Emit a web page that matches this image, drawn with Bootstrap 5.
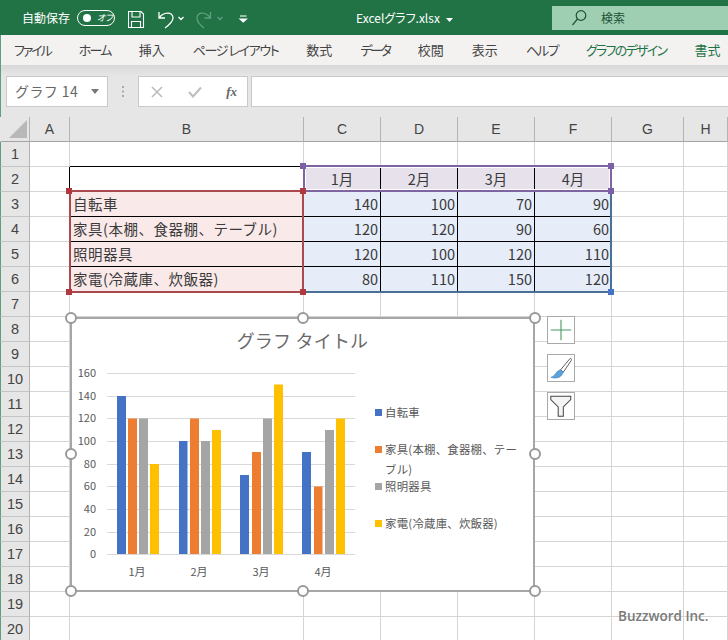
<!DOCTYPE html>
<html lang="ja">
<head>
<meta charset="utf-8">
<title>Excelグラフ.xlsx</title>
<link href="https://cdn.jsdelivr.net/npm/bootstrap@5.3.0/dist/css/bootstrap.min.css" rel="stylesheet">
<style>
html,body{height:640px;overflow:hidden;background:#fff}
body{font-family:"Noto Sans CJK JP","Noto Sans",sans-serif;color:#333}
.title-bar{height:35px;background:#217346;color:#fff;font-size:12px}
.autosave{margin-left:22px;width:48px;white-space:nowrap}
.toggle-pill{width:38px;height:16px;margin-left:7px;border:1.5px solid #fff;border-radius:8px;font-size:9px;font-style:italic;padding-left:5px;gap:6px;font-feature-settings:"palt"}
.toggle-knob{width:8px;height:8px;border-radius:50%;background:#fff}
.qa-strip{display:block;margin-left:13px;flex:none}
.file-name{position:absolute;left:356px;top:0;line-height:35px;white-space:nowrap;font-feature-settings:"palt"}
.file-name svg{margin-left:6px}
.search-box{position:absolute;left:552px;top:6px;width:176px;height:24px;background:#9fcfb2;color:#1d5236;padding-left:19px;gap:14px;font-size:12px}
.ribbon-tabs{height:30px;background:#f3f2f1;padding-left:13px;gap:28px;font-size:13px;color:#444;border-left:1px solid #5f9f7f;white-space:nowrap;font-feature-settings:"palt"}
.ribbon-tabs .chart-tab{color:#1f7246}
.ribbon-tabs .kern-a{letter-spacing:-2.1px}
.ribbon-tabs .kern-b{letter-spacing:-1.7px}
.ribbon-tabs .kern-c{letter-spacing:-1.4px}
.ribbon-tabs .kern-d{letter-spacing:-2.3px}
.formula-area{height:52px;background:linear-gradient(#d8d8d8,#e6e6e6 11px);padding:11px 0 10px 5px;border-left:1px solid #5f9f7f}
.name-box{width:102px;height:31px;background:#fff;border:1px solid #c9c9c9;font-size:14px;color:#666;padding:0 8px;letter-spacing:.4px}
.grip-dots{width:30px;flex:none}
.fx-box{width:110px;height:31px;background:#fff;border:1px solid #c9c9c9;padding:0 10px 0 11px}
.fx-mark{font-family:"Liberation Serif",serif;font-style:italic;font-weight:700;font-size:13px;color:#666}
.formula-input{height:31px;margin-left:3px;background:#fff;border:1px solid #c9c9c9;border-right:0;flex:1}
.sheet-wrap{height:523px;overflow:hidden}
.sheet-grid.table{table-layout:fixed;width:728px;margin:0;border-collapse:separate;border-spacing:0;--bs-table-color:#3a3a3a;--bs-table-bg:#fff}
.sheet-grid.table>:not(caption)>*>*{padding:0;height:25px;line-height:24px;border-width:0 1px 1px 0;border-style:solid;border-color:#d4d4d4;font-size:14.5px;font-weight:400;box-shadow:none;vertical-align:middle}
.sheet-grid.table>*>*>th{background:#e6e6e6;text-align:center;color:#444;font-family:"Liberation Sans",sans-serif;font-size:14px;border-color:#b4b4b4}
.sheet-grid.table>*>tr>.row-num{border-left:1px solid #5f9f7f;border-bottom-color:#c4c4c4;font-size:14.5px}
.sheet-grid.table>thead>tr>th{border-bottom-color:#a4a4a4}
.sheet-grid.table>thead>tr>th.corner-cell{border-left:1px solid #e6e6e6;position:relative}
.corner-tri{position:absolute;left:8px;top:3px;width:18px;height:18px;background:#b8b8b8;clip-path:polygon(100% 0,100% 100%,0 100%)}
.sheet-grid.table>*>*>.cell-name{background:#f9e9e9;padding-left:3px;white-space:nowrap;letter-spacing:.5px}
.sheet-grid.table>*>*>.cell-num{background:#e6edf9;text-align:right;padding-right:2px}
.sheet-grid.table>*>*>.cell-head{background:#e6e1ea;text-align:center}
.sheet-grid.table>*>*>.b-b{border-bottom-color:#000}
.sheet-grid.table>*>*>.b-r{border-right-color:#000}
.range-box{position:absolute;pointer-events:none}
.range-purple{left:303px;top:48px;width:309px;height:27px;border:2px solid #8064a2;box-shadow:inset 0 0 0 1px #fff}
.range-red{left:69px;top:73px;width:235px;height:103px;border:2px solid #a94a4e}
.range-blue{left:303px;top:73px;width:309px;height:103px;border:solid #4a7096;border-width:0 2px 2px 0}
.range-dot{position:absolute;width:6px;height:6px}
.dot-purple{background:#7b5fa8}
.dot-red{background:#b0393f}
.dot-blue{background:#4472c4}
.chart-frame{position:absolute;left:70px;top:200px;width:465px;height:275px;background:#fff;border:2px solid #a6a6a6;color:#595959}
.chart-title{height:42px;line-height:42px;font-size:18px;text-align:center;letter-spacing:.2px;color:#6a6a6a}
.chart-plot{display:block;flex:none}
.plot-label{font-size:11px;fill:#595959;font-family:"Noto Sans CJK JP",sans-serif}
.legend-col{padding-top:32.5px;width:147px;font-size:11.4px;letter-spacing:.25px;list-style:none;margin:0;padding-left:0}
.legend-row{height:37px;gap:3px;line-height:20px;padding-top:8.5px}
.legend-swatch{width:7px;height:7px;margin-top:6.5px;flex:none}
.grip{position:absolute;width:12px;height:12px;border-radius:50%;background:#fff;border:2px solid #999}
.chart-tools{position:absolute;left:547px;top:199px;gap:10px}
.tool-btn{display:block;width:28px;height:28px;background:#fff;border:1px solid #aaa}
.watermark{position:absolute;left:618px;top:489px;font-family:"Open Sans",sans-serif;font-size:13.5px;font-weight:600;color:#7a7a7a;line-height:20px;white-space:nowrap}
</style>
</head>
<body class="m-0">
<header class="title-bar d-flex align-items-center position-relative">
  <span class="autosave">自動保存</span>
  <span class="toggle-pill d-flex align-items-center"><span class="toggle-knob"></span><span>オフ</span></span>
  <svg class="qa-strip" width="125" height="24" viewBox="128 5 125 24" fill="none" stroke="#fff" stroke-width="1.1">
    <path d="M128.5 10.5H141L143.5 13V26.5H128.5Z"/>
    <path d="M132 10.5V16H140V10.5M131.5 26.5V20.5H140.5V26.5"/>
    <path d="M159 11V17H165M159 17C163 11 173 10 173 17C173 21 169 24 165 27" stroke-width="1.3"/>
    <path d="M178.5 16L181 18.5L183.5 16" stroke-width="1.3"/>
    <path d="M210.5 11V17H204.5M210.5 17C206.500 11 197 10 197 17C197 21 200 24 204 27M217.500 16L220 18.500L222.500 16" stroke="#5f9f7f" stroke-width="1.3"/>
    <path d="M240 15H246.500" />
    <path d="M240 18H246.500L243.200 21Z" fill="#fff"/>
  </svg>
  <span class="file-name">Excelグラフ.xlsx<svg width="7" height="4" viewBox="0 0 7 4" class="align-middle"><path d="M0 0H7L3.500 4Z" fill="#fff"/></svg></span>
  <div class="search-box d-flex align-items-center">
    <svg width="16" height="18" viewBox="0 0 16 18" fill="none" stroke="#1d5236" stroke-width="1.2"><circle cx="10" cy="6.500" r="4.800"/><path d="M6.500 10L1.500 16"/></svg>
    <span>検索</span>
  </div>
</header>
<nav class="ribbon-tabs d-flex align-items-center">
  <span class="kern-a">ファイル</span><span class="kern-b">ホーム</span><span>挿入</span><span class="kern-c">ページ レイアウト</span><span>数式</span><span class="kern-d">データ</span><span>校閲</span><span>表示</span><span class="kern-b">ヘルプ</span><span class="chart-tab kern-b">グラフのデザイン</span><span class="chart-tab">書式</span>
</nav>
<div class="formula-area d-flex">
  <div class="name-box d-flex align-items-center justify-content-between"><span>グラフ 14</span><svg width="8" height="5" viewBox="0 0 8 5"><path d="M0 0H8L4 5Z" fill="#777"/></svg></div>
  <div class="grip-dots d-flex align-items-center justify-content-center"><svg width="2" height="11" viewBox="0 0 2 11"><path d="M0 0h2v2H0zM0 4.500h2v2H0zM0 9h2v2H0z" fill="#aaa"/></svg></div>
  <div class="fx-box d-flex align-items-center justify-content-between">
    <svg width="14" height="14" viewBox="0 0 14 14" fill="none" stroke="#bdbdbd" stroke-width="1.600"><path d="M2 2L12 12M12 2L2 12"/></svg>
    <svg width="16" height="14" viewBox="0 0 16 14" fill="none" stroke="#bdbdbd" stroke-width="2"><path d="M2 7L6 11.500L14 2.500"/></svg>
    <span class="fx-mark">fx</span>
  </div>
  <div class="formula-input"></div>
</div>
<main class="sheet-wrap position-relative">
<table class="table sheet-grid">
<colgroup><col style="width:30px"><col style="width:40px"><col style="width:234px"><col style="width:77px"><col style="width:77px"><col style="width:77px"><col style="width:77px"><col style="width:72px"><col style="width:44px"></colgroup>
<thead><tr><th class="corner-cell"><span class="corner-tri"></span></th><th>A</th><th>B</th><th>C</th><th>D</th><th>E</th><th>F</th><th>G</th><th>H</th></tr></thead>
<tbody>
<tr><th class="row-num">1</th><td></td><td class="b-b"></td><td></td><td></td><td></td><td></td><td></td><td></td></tr>
<tr><th class="row-num">2</th><td class="b-r"></td><td></td><td class="cell-head b-r">1月</td><td class="cell-head b-r">2月</td><td class="cell-head b-r">3月</td><td class="cell-head">4月</td><td></td><td></td></tr>
<tr><th class="row-num">3</th><td></td><td class="cell-name b-b">自転車</td><td class="cell-num b-b b-r">140</td><td class="cell-num b-b b-r">100</td><td class="cell-num b-b b-r">70</td><td class="cell-num b-b">90</td><td></td><td></td></tr>
<tr><th class="row-num">4</th><td></td><td class="cell-name b-b">家具(本棚、食器棚、テーブル)</td><td class="cell-num b-b b-r">120</td><td class="cell-num b-b b-r">120</td><td class="cell-num b-b b-r">90</td><td class="cell-num b-b">60</td><td></td><td></td></tr>
<tr><th class="row-num">5</th><td></td><td class="cell-name b-b">照明器具</td><td class="cell-num b-b b-r">120</td><td class="cell-num b-b b-r">100</td><td class="cell-num b-b b-r">120</td><td class="cell-num b-b">110</td><td></td><td></td></tr>
<tr><th class="row-num">6</th><td></td><td class="cell-name">家電(冷蔵庫、炊飯器)</td><td class="cell-num b-r">80</td><td class="cell-num b-r">110</td><td class="cell-num b-r">150</td><td class="cell-num">120</td><td></td><td></td></tr>
<tr><th class="row-num">7</th><td></td><td></td><td></td><td></td><td></td><td></td><td></td><td></td></tr>
<tr><th class="row-num">8</th><td></td><td></td><td></td><td></td><td></td><td></td><td></td><td></td></tr>
<tr><th class="row-num">9</th><td></td><td></td><td></td><td></td><td></td><td></td><td></td><td></td></tr>
<tr><th class="row-num">10</th><td></td><td></td><td></td><td></td><td></td><td></td><td></td><td></td></tr>
<tr><th class="row-num">11</th><td></td><td></td><td></td><td></td><td></td><td></td><td></td><td></td></tr>
<tr><th class="row-num">12</th><td></td><td></td><td></td><td></td><td></td><td></td><td></td><td></td></tr>
<tr><th class="row-num">13</th><td></td><td></td><td></td><td></td><td></td><td></td><td></td><td></td></tr>
<tr><th class="row-num">14</th><td></td><td></td><td></td><td></td><td></td><td></td><td></td><td></td></tr>
<tr><th class="row-num">15</th><td></td><td></td><td></td><td></td><td></td><td></td><td></td><td></td></tr>
<tr><th class="row-num">16</th><td></td><td></td><td></td><td></td><td></td><td></td><td></td><td></td></tr>
<tr><th class="row-num">17</th><td></td><td></td><td></td><td></td><td></td><td></td><td></td><td></td></tr>
<tr><th class="row-num">18</th><td></td><td></td><td></td><td></td><td></td><td></td><td></td><td></td></tr>
<tr><th class="row-num">19</th><td></td><td></td><td></td><td></td><td></td><td></td><td></td><td></td></tr>
<tr><th class="row-num">20</th><td></td><td></td><td></td><td></td><td></td><td></td><td></td><td></td></tr>
</tbody>
</table>

<div class="range-box range-purple"></div>
<div class="range-box range-blue"></div>
<div class="range-box range-red"></div>
<i class="range-dot dot-purple" style="left:300px;top:46px"></i>
<i class="range-dot dot-purple" style="left:608px;top:46px"></i>
<i class="range-dot dot-purple" style="left:608px;top:71px"></i>
<i class="range-dot dot-red" style="left:66px;top:71px"></i>
<i class="range-dot dot-red" style="left:300px;top:71px"></i>
<i class="range-dot dot-red" style="left:66px;top:172px"></i>
<i class="range-dot dot-red" style="left:300px;top:172px"></i>
<i class="range-dot dot-blue" style="left:608px;top:172px"></i>

<section class="chart-frame">
  <div class="chart-title">グラフ タイトル</div>
  <div class="d-flex">
    <svg class="chart-plot" width="303" height="228" viewBox="72 361 303 228">
      <g stroke="#d9d9d9" stroke-width="1">
        <path d="M107 373.500H355M107 396.500H355M107 418.500H355M107 441.500H355M107 464.500H355M107 486.500H355M107 509.500H355M107 532.500H355M107 554.500H355"/>
      </g>
      <g fill="#4472c4"><rect x="117" y="396" width="9" height="158"/><rect x="179" y="441" width="8.500" height="113"/><rect x="240" y="475" width="9" height="79"/><rect x="302" y="452" width="9" height="102"/></g>
      <g fill="#ed7d31"><rect x="128" y="418.500" width="9" height="135.500"/><rect x="190" y="418.500" width="9" height="135.500"/><rect x="252" y="452" width="9" height="102"/><rect x="314" y="486.500" width="8.500" height="67.500"/></g>
      <g fill="#a5a5a5"><rect x="139" y="418.500" width="9" height="135.500"/><rect x="201" y="441" width="9" height="113"/><rect x="263" y="418.500" width="9" height="135.500"/><rect x="325" y="430" width="9" height="124"/></g>
      <g fill="#ffc000"><rect x="150" y="464" width="9" height="90"/><rect x="212" y="430" width="9" height="124"/><rect x="274" y="384.500" width="9" height="169.500"/><rect x="336" y="418.500" width="9" height="135.500"/></g>
      <g class="plot-label" text-anchor="end">
        <text x="96" y="377">160</text><text x="96" y="400">140</text><text x="96" y="422">120</text><text x="96" y="445">100</text><text x="96" y="468">80</text><text x="96" y="490">60</text><text x="96" y="513">40</text><text x="96" y="536">20</text><text x="96" y="558">0</text>
      </g>
      <g class="plot-label" text-anchor="middle">
        <text x="137" y="576">1月</text><text x="199" y="576">2月</text><text x="261" y="576">3月</text><text x="323" y="576">4月</text>
      </g>
    </svg>
    <ul class="legend-col">
      <li class="legend-row d-flex"><span class="legend-swatch" style="background:#4472c4"></span><span>自転車</span></li>
      <li class="legend-row d-flex"><span class="legend-swatch" style="background:#ed7d31"></span><span>家具(本棚、食器棚、テーブル)</span></li>
      <li class="legend-row d-flex"><span class="legend-swatch" style="background:#a5a5a5"></span><span>照明器具</span></li>
      <li class="legend-row d-flex"><span class="legend-swatch" style="background:#ffc000"></span><span>家電(冷蔵庫、炊飯器)</span></li>
    </ul>
  </div>
</section>
<i class="grip" style="left:65px;top:195px"></i>
<i class="grip" style="left:297px;top:195px"></i>
<i class="grip" style="left:529px;top:195px"></i>
<i class="grip" style="left:65px;top:331px"></i>
<i class="grip" style="left:529px;top:331px"></i>
<i class="grip" style="left:65px;top:468px"></i>
<i class="grip" style="left:297px;top:468px"></i>
<i class="grip" style="left:529px;top:468px"></i>

<div class="chart-tools d-flex flex-column">
  <svg class="tool-btn" viewBox="0 0 28 28"><path d="M3 14H25M14 3V25" stroke="#4a9a60" stroke-width="1.200" fill="none"/></svg>
  <svg class="tool-btn" viewBox="0 0 28 28"><path d="M24 3.500C25.500 4 25.500 5 25 6L16.500 18.500L13.500 16Z" fill="#fff" stroke="#555" stroke-width="1"/><path d="M3 24C7 23.500 8 19 11 17L13.500 15.800L16.500 18.500C15.500 21.500 13 24.500 9 24.700C7 24.800 5 24.800 3 24Z" fill="#5ba3dc" stroke="#3f7fb5" stroke-width=".6"/></svg>
  <svg class="tool-btn" viewBox="0 0 28 28"><path d="M3 3.500H24.500V7L16.500 15V25H11V15L3 7Z" fill="#f4f4f4" stroke="#444" stroke-width="1.100"/></svg>
</div>
<div class="watermark">Buzzword Inc.</div>
</main>
<script src="https://cdn.jsdelivr.net/npm/bootstrap@5.3.0/dist/js/bootstrap.bundle.min.js"></script>
</body>
</html>
